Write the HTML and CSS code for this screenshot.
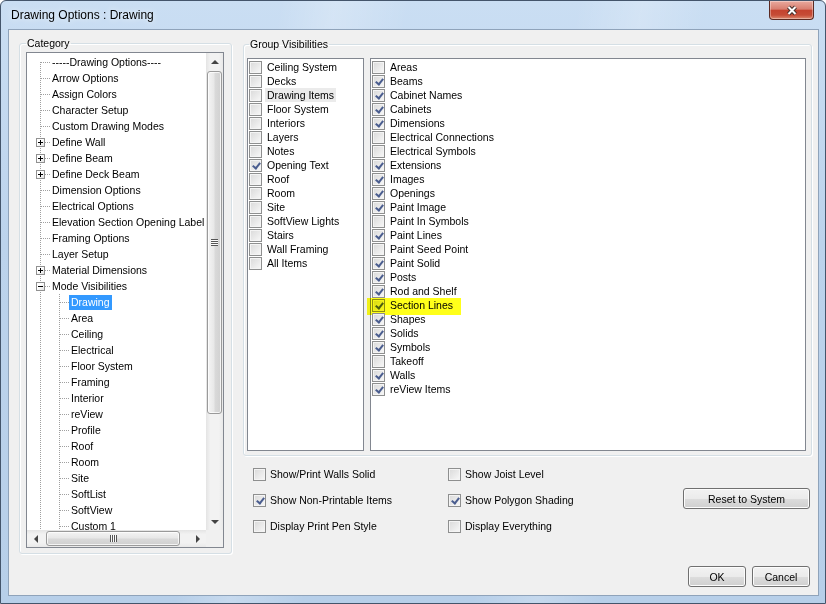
FILE: index.html
```html
<!DOCTYPE html>
<html lang="en">
<head>
    <meta charset="UTF-8">
    <title>Drawing Options : Drawing</title>
    <link rel="stylesheet" href="styles.css">
</head>
<body>
    <div class="window">
        <div class="titlebar">
            <span class="title">Drawing Options : Drawing</span>
            <button class="close-btn" aria-label="Close">
                <svg width="12" height="11" viewBox="0 0 12 11">
                    <path d="M2.5 2 L9.5 9 M9.5 2 L2.5 9" stroke="#43302c" stroke-width="4"/>
                    <path d="M2.5 2 L9.5 9 M9.5 2 L2.5 9" stroke="#fff" stroke-width="2"/>
                </svg>
            </button>
        </div>

        <div class="client">
            <!-- left: category tree -->
            <fieldset class="group category">
                <legend>Category</legend>
                <div class="tree">
                    <div class="tree-items">
                        <div class="node"><span class="g first"></span><span class="lbl">-----Drawing Options----</span></div>
                        <div class="node"><span class="g tee"></span><span class="lbl">Arrow Options</span></div>
                        <div class="node"><span class="g tee"></span><span class="lbl">Assign Colors</span></div>
                        <div class="node"><span class="g tee"></span><span class="lbl">Character Setup</span></div>
                        <div class="node"><span class="g tee"></span><span class="lbl">Custom Drawing Modes</span></div>
                        <div class="node"><span class="g tee"><span class="exp plus"></span></span><span class="lbl">Define Wall</span></div>
                        <div class="node"><span class="g tee"><span class="exp plus"></span></span><span class="lbl">Define Beam</span></div>
                        <div class="node"><span class="g tee"><span class="exp plus"></span></span><span class="lbl">Define Deck Beam</span></div>
                        <div class="node"><span class="g tee"></span><span class="lbl">Dimension Options</span></div>
                        <div class="node"><span class="g tee"></span><span class="lbl">Electrical Options</span></div>
                        <div class="node"><span class="g tee"></span><span class="lbl">Elevation Section Opening Label</span></div>
                        <div class="node"><span class="g tee"></span><span class="lbl">Framing Options</span></div>
                        <div class="node"><span class="g tee"></span><span class="lbl">Layer Setup</span></div>
                        <div class="node"><span class="g tee"><span class="exp plus"></span></span><span class="lbl">Material Dimensions</span></div>
                        <div class="node"><span class="g tee"><span class="exp"></span></span><span class="lbl">Mode Visibilities</span></div>
                        <div class="node"><span class="g pipe"></span><span class="g tee"></span><span class="lbl selected">Drawing</span></div>
                        <div class="node"><span class="g pipe"></span><span class="g tee"></span><span class="lbl">Area</span></div>
                        <div class="node"><span class="g pipe"></span><span class="g tee"></span><span class="lbl">Ceiling</span></div>
                        <div class="node"><span class="g pipe"></span><span class="g tee"></span><span class="lbl">Electrical</span></div>
                        <div class="node"><span class="g pipe"></span><span class="g tee"></span><span class="lbl">Floor System</span></div>
                        <div class="node"><span class="g pipe"></span><span class="g tee"></span><span class="lbl">Framing</span></div>
                        <div class="node"><span class="g pipe"></span><span class="g tee"></span><span class="lbl">Interior</span></div>
                        <div class="node"><span class="g pipe"></span><span class="g tee"></span><span class="lbl">reView</span></div>
                        <div class="node"><span class="g pipe"></span><span class="g tee"></span><span class="lbl">Profile</span></div>
                        <div class="node"><span class="g pipe"></span><span class="g tee"></span><span class="lbl">Roof</span></div>
                        <div class="node"><span class="g pipe"></span><span class="g tee"></span><span class="lbl">Room</span></div>
                        <div class="node"><span class="g pipe"></span><span class="g tee"></span><span class="lbl">Site</span></div>
                        <div class="node"><span class="g pipe"></span><span class="g tee"></span><span class="lbl">SoftList</span></div>
                        <div class="node"><span class="g pipe"></span><span class="g tee"></span><span class="lbl">SoftView</span></div>
                        <div class="node"><span class="g pipe"></span><span class="g tee"></span><span class="lbl">Custom 1</span></div>
                    </div>
                    <div class="vscroll">
                        <span class="sb-btn"><span class="arrow up"></span></span>
                        <div class="sb-track"><span class="thumb"><span class="grip"></span></span></div>
                        <span class="sb-btn"><span class="arrow down"></span></span>
                    </div>
                    <div class="hscroll">
                        <span class="sb-btn"><span class="arrow left"></span></span>
                        <div class="sb-track"><span class="thumb"><span class="grip"></span></span></div>
                        <span class="sb-btn"><span class="arrow right"></span></span>
                    </div>
                    <div class="sb-corner"></div>
                </div>
            </fieldset>

            <!-- right: visibilities + options -->
            <div class="right-col">
                <fieldset class="group visibilities">
                    <legend>Group Visibilities</legend>
                    <div class="lists">
                        <ul class="checklist groups">
                            <li><span class="chk"></span><span class="txt">Ceiling System</span></li>
                            <li><span class="chk"></span><span class="txt">Decks</span></li>
                            <li><span class="chk"></span><span class="txt hot">Drawing Items</span></li>
                            <li><span class="chk"></span><span class="txt">Floor System</span></li>
                            <li><span class="chk"></span><span class="txt">Interiors</span></li>
                            <li><span class="chk"></span><span class="txt">Layers</span></li>
                            <li><span class="chk"></span><span class="txt">Notes</span></li>
                            <li><span class="chk on"></span><span class="txt">Opening Text</span></li>
                            <li><span class="chk"></span><span class="txt">Roof</span></li>
                            <li><span class="chk"></span><span class="txt">Room</span></li>
                            <li><span class="chk"></span><span class="txt">Site</span></li>
                            <li><span class="chk"></span><span class="txt">SoftView Lights</span></li>
                            <li><span class="chk"></span><span class="txt">Stairs</span></li>
                            <li><span class="chk"></span><span class="txt">Wall Framing</span></li>
                            <li><span class="chk"></span><span class="txt">All Items</span></li>
                        </ul>
                        <ul class="checklist items">
                            <li><span class="chk"></span><span class="txt">Areas</span></li>
                            <li><span class="chk on"></span><span class="txt">Beams</span></li>
                            <li><span class="chk on"></span><span class="txt">Cabinet Names</span></li>
                            <li><span class="chk on"></span><span class="txt">Cabinets</span></li>
                            <li><span class="chk on"></span><span class="txt">Dimensions</span></li>
                            <li><span class="chk"></span><span class="txt">Electrical Connections</span></li>
                            <li><span class="chk"></span><span class="txt">Electrical Symbols</span></li>
                            <li><span class="chk on"></span><span class="txt">Extensions</span></li>
                            <li><span class="chk on"></span><span class="txt">Images</span></li>
                            <li><span class="chk on"></span><span class="txt">Openings</span></li>
                            <li><span class="chk on"></span><span class="txt">Paint Image</span></li>
                            <li><span class="chk"></span><span class="txt">Paint In Symbols</span></li>
                            <li><span class="chk on"></span><span class="txt">Paint Lines</span></li>
                            <li><span class="chk"></span><span class="txt">Paint Seed Point</span></li>
                            <li><span class="chk on"></span><span class="txt">Paint Solid</span></li>
                            <li><span class="chk on"></span><span class="txt">Posts</span></li>
                            <li><span class="chk on"></span><span class="txt">Rod and Shelf</span></li>
                            <li class="marked"><span class="chk on"></span><span class="txt">Section Lines</span><span class="marker"></span></li>
                            <li><span class="chk on"></span><span class="txt">Shapes</span></li>
                            <li><span class="chk on"></span><span class="txt">Solids</span></li>
                            <li><span class="chk on"></span><span class="txt">Symbols</span></li>
                            <li><span class="chk"></span><span class="txt">Takeoff</span></li>
                            <li><span class="chk on"></span><span class="txt">Walls</span></li>
                            <li><span class="chk on"></span><span class="txt">reView Items</span></li>
                        </ul>
                    </div>
                </fieldset>

                <div class="options">
                    <label class="opt col1"><span class="chk"></span><span>Show/Print Walls Solid</span></label>
                    <label class="opt col2"><span class="chk"></span><span>Show Joist Level</span></label>
                    <label class="opt col1"><span class="chk on"></span><span>Show Non-Printable Items</span></label>
                    <label class="opt col2"><span class="chk on"></span><span>Show Polygon Shading</span></label>
                    <button class="btn reset-btn">Reset to System</button>
                    <label class="opt col1"><span class="chk"></span><span>Display Print Pen Style</span></label>
                    <label class="opt col2"><span class="chk"></span><span>Display Everything</span></label>
                </div>

                <div class="dialog-buttons">
                    <button class="btn">OK</button>
                    <button class="btn">Cancel</button>
                </div>
            </div>
        </div>
    </div>
</body>
</html>
```

FILE: styles.css
```css
* {
    box-sizing: border-box;
}

body {
    margin: 0;
    background: #ffffff;
    font-family: 'Liberation Sans', Arial, sans-serif;
    font-size: 10.5px;
    color: #000;
    overflow: hidden;
}

/* ---- window frame ---- */

.window {
    width: 826px;
    height: 604px;
    border: 1px solid #44556b;
    border-radius: 6px 6px 0 0;
    padding: 0 6px 7px 7px;
    display: flex;
    flex-direction: column;
    background:
        linear-gradient(100deg, transparent 30%, rgba(255, 255, 255, 0.22) 36%, transparent 44%, transparent 62%, rgba(255, 255, 255, 0.2) 69%, transparent 76%),
        linear-gradient(to bottom, #cadef3 0%, #bcd3ec 40%, #b7cfe9 100%);
}

.titlebar {
    height: 28px;
    display: flex;
    align-items: center;
}

.title {
    margin-left: 3px;
    font-size: 12px;
    color: #000;
    text-shadow: 0 0 6px rgba(255, 255, 255, 0.9);
}

.close-btn {
    margin-left: auto;
    margin-right: 5px;
    align-self: flex-start;
    width: 45px;
    height: 19px;
    padding: 0;
    border: 1px solid #5b2a22;
    border-top: none;
    border-radius: 0 0 4px 4px;
    background: linear-gradient(to bottom, #e9aa9e 0%, #d87e70 45%, #c4432f 52%, #c64c36 78%, #dc8a70 100%);
    box-shadow: inset 0 0 0 1px rgba(255, 255, 255, 0.35);
    display: flex;
    align-items: center;
    justify-content: center;
}

.client {
    flex: 1;
    background: #f0f0f0;
    border: 1px solid #8fa3ba;
    padding: 6px 6px 0 10px;
    display: grid;
    grid-template-columns: 213px 569px;
    column-gap: 11px;
    align-items: start;
}

/* ---- group boxes ---- */

.group {
    margin: 0;
    min-width: 0;
    border: 1px solid #d5dfe5;
    border-radius: 3px;
    box-shadow: inset 1px 1px 0 #fff, 1px 1px 0 #fff;
}

.group legend {
    padding: 0 1px;
    line-height: 14px;
}

.category {
    height: 518px;
    padding: 2px 7px 5px 6px;
}

.visibilities {
    margin-top: 1px;
    padding: 7px 5px 4px 3px;
}

.visibilities legend {
    margin-left: 2px;
}

/* ---- tree view ---- */

.tree {
    height: 496px;
    border: 1px solid #828790;
    background: #fff;
    display: grid;
    grid-template-columns: 1fr 17px;
    grid-template-rows: 1fr 17px;
}

.tree-items {
    overflow: hidden;
    padding: 1px 0 0 4px;
}

.node {
    display: flex;
    align-items: center;
    height: 16px;
    white-space: nowrap;
}

.lbl {
    padding: 0 2px;
    line-height: 15px;
}

.lbl.selected {
    background: #3399ff;
    color: #fff;
}

.g {
    flex: none;
    width: 19px;
    height: 16px;
    display: flex;
    align-items: center;
}

.g.tee {
    background:
        repeating-linear-gradient(to right, #a0a0a0 0 1px, transparent 1px 2px) 10px 8px / 9px 1px no-repeat,
        repeating-linear-gradient(to bottom, #a0a0a0 0 1px, transparent 1px 2px) 9px 0 / 1px 16px no-repeat;
}

.g.first {
    background:
        repeating-linear-gradient(to right, #a0a0a0 0 1px, transparent 1px 2px) 10px 8px / 9px 1px no-repeat,
        repeating-linear-gradient(to bottom, #a0a0a0 0 1px, transparent 1px 2px) 9px 8px / 1px 8px no-repeat;
}

.g.pipe {
    background: repeating-linear-gradient(to bottom, #a0a0a0 0 1px, transparent 1px 2px) 9px 0 / 1px 16px no-repeat;
}

.exp {
    width: 9px;
    height: 9px;
    margin-left: 5px;
    border: 1px solid #919191;
    background:
        linear-gradient(#000, #000) center / 5px 1px no-repeat,
        linear-gradient(135deg, #ffffff 40%, #e2e2e2);
}

.exp.plus {
    background:
        linear-gradient(#000, #000) center / 5px 1px no-repeat,
        linear-gradient(#000, #000) center / 1px 5px no-repeat,
        linear-gradient(135deg, #ffffff 40%, #e2e2e2);
}

/* ---- scroll bars ---- */

.vscroll,
.hscroll {
    display: flex;
    background: #f0f0f0;
}

.vscroll {
    flex-direction: column;
    background: linear-gradient(to right, #e4e4e4, #f2f2f2 25%, #f2f2f2 75%, #e9e9e9);
}

.hscroll {
    background: linear-gradient(to bottom, #e4e4e4, #f2f2f2 25%, #f2f2f2 75%, #e9e9e9);
}

.sb-btn {
    flex: none;
    width: 17px;
    height: 17px;
    display: flex;
    align-items: center;
    justify-content: center;
}

.sb-track {
    flex: 1;
    display: flex;
}

.vscroll .sb-track {
    flex-direction: column;
}

.thumb {
    border: 1px solid #9a9a9a;
    border-radius: 3px;
    box-shadow: inset 0 0 0 1px rgba(255, 255, 255, 0.75);
    display: flex;
    align-items: center;
    justify-content: center;
}

.vscroll .thumb {
    margin: 1px 1px 0;
    height: 343px;
    background: linear-gradient(to right, #f4f4f4, #e8e8e8 45%, #d9d9d9 55%, #d0d0d0);
}

.hscroll .thumb {
    margin: 1px 0 1px 2px;
    width: 134px;
    background: linear-gradient(to bottom, #f4f4f4, #e8e8e8 45%, #d9d9d9 55%, #d0d0d0);
}

.vscroll .grip {
    width: 7px;
    height: 7px;
    background: repeating-linear-gradient(to bottom, #555 0 1px, #fafafa 1px 2px);
}

.hscroll .grip {
    width: 7px;
    height: 7px;
    background: repeating-linear-gradient(to right, #555 0 1px, #fafafa 1px 2px);
}

.arrow {
    width: 0;
    height: 0;
    border: 4px solid transparent;
}

.arrow.up {
    border-top: 0;
    border-bottom-color: #444;
}

.arrow.down {
    border-bottom: 0;
    border-top-color: #444;
}

.arrow.left {
    border-left: 0;
    border-right-color: #444;
}

.arrow.right {
    border-right: 0;
    border-left-color: #444;
}

.sb-corner {
    background: #f0f0f0;
}

/* ---- check lists ---- */

.lists {
    display: flex;
    gap: 6px;
}

.checklist {
    list-style: none;
    margin: 0;
    height: 393px;
    padding: 1px 0 0 1px;
    border: 1px solid #828790;
    background: #fff;
}

.checklist.groups {
    width: 117px;
}

.checklist.items {
    width: 436px;
}

.checklist li {
    position: relative;
    display: flex;
    align-items: center;
    height: 14px;
    white-space: nowrap;
}

.txt {
    margin-left: 3px;
    padding: 0 2px;
    line-height: 14px;
}

.txt.hot {
    background: #ebebeb;
}

.marker {
    position: absolute;
    left: -5px;
    top: 0;
    width: 94px;
    height: 17px;
    background: #ffff1a;
    mix-blend-mode: multiply;
}

.chk {
    flex: none;
    position: relative;
    width: 13px;
    height: 13px;
    border: 1px solid #8e8f8f;
    background: linear-gradient(135deg, #d9d9d9, #f8f8f8);
    box-shadow: inset 0 0 0 1px #f4f4f4;
}

.chk.on::after {
    content: "";
    position: absolute;
    left: 4px;
    top: 1px;
    width: 3px;
    height: 6px;
    border: solid #4a5d8f;
    border-width: 0 2px 2px 0;
    transform: rotate(38deg);
}

/* ---- options + buttons ---- */

.options {
    margin-top: 5px;
    padding-left: 10px;
    display: grid;
    grid-template-columns: 195px 235px 127px;
    grid-template-rows: repeat(3, 26px);
}

.opt {
    display: flex;
    align-items: center;
    white-space: nowrap;
}

.opt.col1 {
    grid-column: 1;
}

.opt.col2 {
    grid-column: 2;
}

.opt .chk + span {
    margin-left: 4px;
}

.btn {
    height: 21px;
    padding: 0;
    font-family: inherit;
    font-size: 10.5px;
    color: #000;
    border: 1px solid #707070;
    border-radius: 3px;
    background: linear-gradient(to bottom, #f2f2f2 0%, #ebebeb 50%, #dddddd 50%, #cfcfcf 100%);
    box-shadow: inset 0 0 0 1px #fcfcfc;
}

.reset-btn {
    grid-column: 3;
    grid-row: 2;
    align-self: start;
    margin-top: 1px;
}

.dialog-buttons {
    margin-top: 27px;
    padding-right: 2px;
    display: flex;
    justify-content: flex-end;
    gap: 6px;
}

.dialog-buttons .btn {
    width: 58px;
}
```
